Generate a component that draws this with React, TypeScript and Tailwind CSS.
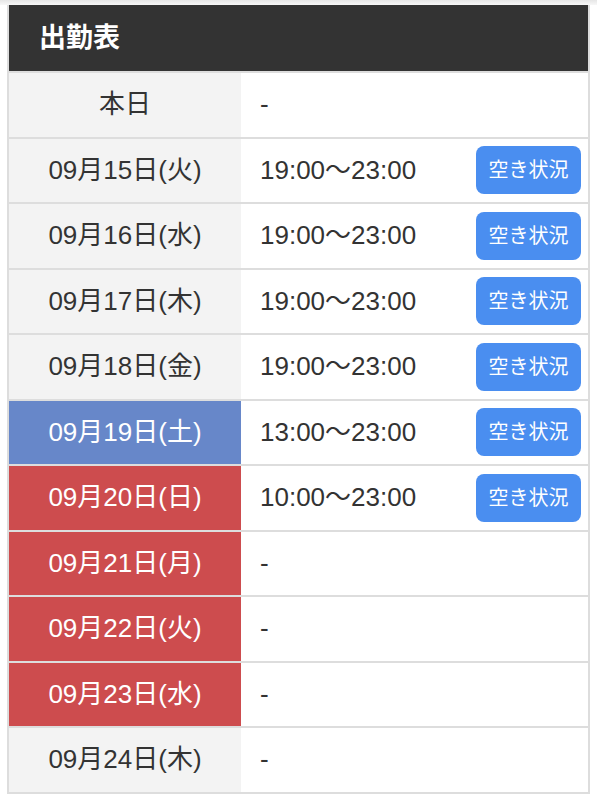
import React from 'react';

type Row = {
  date: string;
  time: string;
  tone: 'gray' | 'blue' | 'red';
  button?: boolean;
};

const rows: Row[] = [
  { date: '本日', time: '-', tone: 'gray' },
  { date: '09月15日(火)', time: '19:00〜23:00', tone: 'gray', button: true },
  { date: '09月16日(水)', time: '19:00〜23:00', tone: 'gray', button: true },
  { date: '09月17日(木)', time: '19:00〜23:00', tone: 'gray', button: true },
  { date: '09月18日(金)', time: '19:00〜23:00', tone: 'gray', button: true },
  { date: '09月19日(土)', time: '13:00〜23:00', tone: 'blue', button: true },
  { date: '09月20日(日)', time: '10:00〜23:00', tone: 'red', button: true },
  { date: '09月21日(月)', time: '-', tone: 'red' },
  { date: '09月22日(火)', time: '-', tone: 'red' },
  { date: '09月23日(水)', time: '-', tone: 'red' },
  { date: '09月24日(木)', time: '-', tone: 'gray' },
];

const toneClass = {
  gray: 'bg-[#f3f3f3] text-[#333333]',
  blue: 'bg-[#6787c9] text-white',
  red: 'bg-[#cd4c4e] text-white',
};

export default function App() {
  return (
    <div
      className="min-h-[800px] w-[597px] bg-white"
      style={{ fontFamily: '"Liberation Sans", "Noto Sans CJK JP", sans-serif' }}
    >
      <div className="h-[5px] bg-gradient-to-b from-[#e6e6e6] to-[#f7f7f7]" />
      <div className="mx-[7px] border-x-2 border-b-2 border-[#dddddd]">
        <div className="flex h-[66px] items-center bg-[#333333] pl-[30px]">
          <h2 className="text-[27px] font-bold leading-none text-white">出勤表</h2>
        </div>
        {rows.map((row, i) => (
          <div
            key={i}
            className="flex h-[65.5px] border-t-2 border-[#dddddd] first:border-t-0"
          >
            <div
              className={`flex w-[232px] shrink-0 items-center justify-center text-[26px] ${toneClass[row.tone]}`}
            >
              {row.date}
            </div>
            <div className="flex flex-1 items-center justify-between pl-[19px] pr-[7px] text-[26px] text-[#333333]">
              <span>{row.time}</span>
              {row.button && (
                <button className="flex h-[48px] w-[105px] items-center justify-center rounded-[8px] bg-[#4a8ef0] text-[20px] text-white">
                  空き状況
                </button>
              )}
            </div>
          </div>
        ))}
      </div>
    </div>
  );
}
